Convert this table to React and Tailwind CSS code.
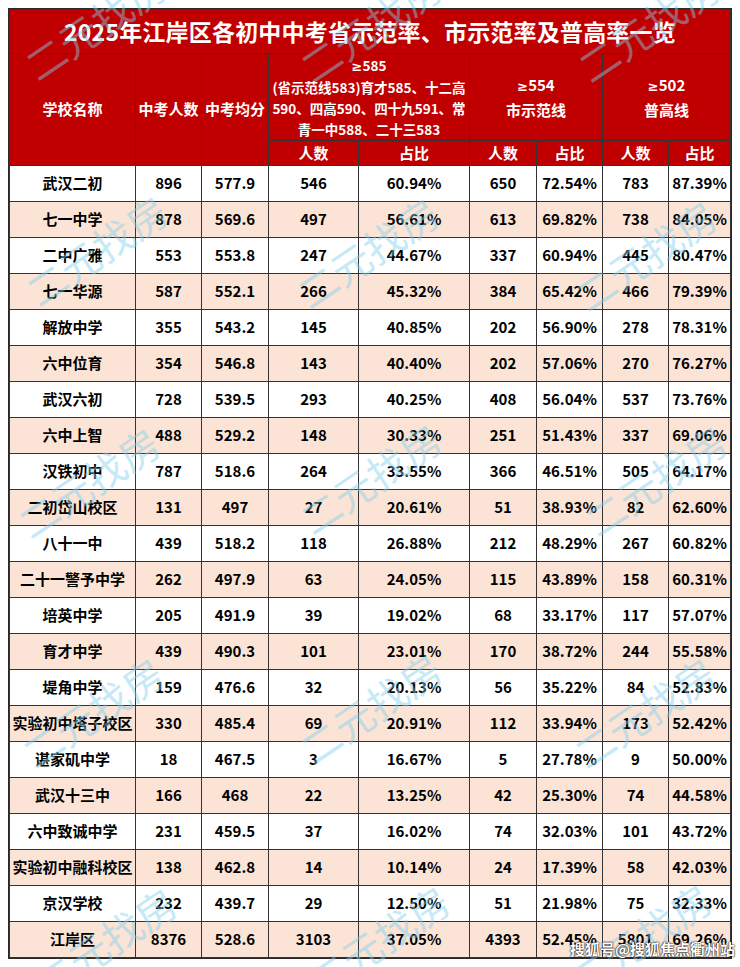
import React from "react";

const rows = [
  ["武汉二初", "896", "577.9", "546", "60.94%", "650", "72.54%", "783", "87.39%"],
  ["七一中学", "878", "569.6", "497", "56.61%", "613", "69.82%", "738", "84.05%"],
  ["二中广雅", "553", "553.8", "247", "44.67%", "337", "60.94%", "445", "80.47%"],
  ["七一华源", "587", "552.1", "266", "45.32%", "384", "65.42%", "466", "79.39%"],
  ["解放中学", "355", "543.2", "145", "40.85%", "202", "56.90%", "278", "78.31%"],
  ["六中位育", "354", "546.8", "143", "40.40%", "202", "57.06%", "270", "76.27%"],
  ["武汉六初", "728", "539.5", "293", "40.25%", "408", "56.04%", "537", "73.76%"],
  ["六中上智", "488", "529.2", "148", "30.33%", "251", "51.43%", "337", "69.06%"],
  ["汉铁初中", "787", "518.6", "264", "33.55%", "366", "46.51%", "505", "64.17%"],
  ["二初岱山校区", "131", "497", "27", "20.61%", "51", "38.93%", "82", "62.60%"],
  ["八十一中", "439", "518.2", "118", "26.88%", "212", "48.29%", "267", "60.82%"],
  ["二十一警予中学", "262", "497.9", "63", "24.05%", "115", "43.89%", "158", "60.31%"],
  ["培英中学", "205", "491.9", "39", "19.02%", "68", "33.17%", "117", "57.07%"],
  ["育才中学", "439", "490.3", "101", "23.01%", "170", "38.72%", "244", "55.58%"],
  ["堤角中学", "159", "476.6", "32", "20.13%", "56", "35.22%", "84", "52.83%"],
  ["实验初中塔子校区", "330", "485.4", "69", "20.91%", "112", "33.94%", "173", "52.42%"],
  ["谌家矶中学", "18", "467.5", "3", "16.67%", "5", "27.78%", "9", "50.00%"],
  ["武汉十三中", "166", "468", "22", "13.25%", "42", "25.30%", "74", "44.58%"],
  ["六中致诚中学", "231", "459.5", "37", "16.02%", "74", "32.03%", "101", "43.72%"],
  ["实验初中融科校区", "138", "462.8", "14", "10.14%", "24", "17.39%", "58", "42.03%"],
  ["京汉学校", "232", "439.7", "29", "12.50%", "51", "21.98%", "75", "32.33%"],
  ["江岸区", "8376", "528.6", "3103", "37.05%", "4393", "52.45%", "5801", "69.26%"],
];

// watermark centres, roughly a 3 x 5 grid
const marks = [
  [95, 24], [370, 26], [648, 26],
  [96, 250], [367, 252], [645, 255],
  [88, 482], [370, 478], [655, 480],
  [92, 712], [370, 708], [644, 712],
  [105, 942], [378, 940], [640, 938],
];

// separate borders: every cell draws its right and bottom edge
const cell = "border-r border-b border-[#333] text-center p-0";
const head = cell + " bg-[#c00000] text-white font-bold";

function Ge({ children }) {
  return (
    <span style={{ fontFamily: '"DejaVu Sans", sans-serif' }} className="text-[13px]">
      {children}
    </span>
  );
}

export default function App() {
  return (
    <div
      className="relative w-[740px] h-[967px] overflow-hidden bg-white"
      style={{ fontFamily: '"Noto Sans CJK SC", "Noto Sans", sans-serif' }}
    >
      <div className="pt-[9px] pl-[9px]">
        <table className="table-fixed border-separate border-spacing-0 border-l border-t border-[#333] outline outline-[#2a2a2a] w-[722px] text-[15px] text-black">
          <colgroup>
            <col className="w-[126px]" />
            <col className="w-[66px]" />
            <col className="w-[67px]" />
            <col className="w-[90px]" />
            <col className="w-[111px]" />
            <col className="w-[67px]" />
            <col className="w-[66px]" />
            <col className="w-[66px]" />
            <col className="w-[62px]" />
          </colgroup>
          <thead>
            <tr className="h-[44px]">
              <th colSpan={9} className={head + " text-[23px] tracking-[0.2px]"}>
                2025年江岸区各初中中考省示范率、市示范率及普高率一览
              </th>
            </tr>
            <tr className="h-[87px]">
              <th rowSpan={2} className={head}>学校名称</th>
              <th rowSpan={2} className={head}>中考人数</th>
              <th rowSpan={2} className={head}>中考均分</th>
              <th colSpan={2} className={head + " text-[13.5px] leading-[21px]"}>
                <Ge>≥</Ge>585
                <br />
                (省示范线583)育才585、十二高
                <br />
                590、四高590、四十九591、常
                <br />
                青一中588、二十三583
              </th>
              <th colSpan={2} className={head + " leading-[23px]"}>
                <Ge>≥</Ge>554
                <br />
                市示范线
              </th>
              <th colSpan={2} className={head + " leading-[23px]"}>
                <Ge>≥</Ge>502
                <br />
                普高线
              </th>
            </tr>
            <tr className="h-[25px]">
              <th className={head}>人数</th>
              <th className={head}>占比</th>
              <th className={head}>人数</th>
              <th className={head}>占比</th>
              <th className={head}>人数</th>
              <th className={head}>占比</th>
            </tr>
          </thead>
          <tbody>
            {rows.map((r, i) => (
              <tr key={r[0]} className="h-[36px]">
                {r.map((v, j) => (
                  <td
                    key={j}
                    className={cell + " font-bold whitespace-nowrap " + (i % 2 ? "bg-[#fbe4d5]" : "bg-white")}
                  >
                    {v}
                  </td>
                ))}
              </tr>
            ))}
          </tbody>
        </table>
      </div>

      {marks.map(([x, y], i) => (
        <div
          key={i}
          className="absolute pointer-events-none whitespace-nowrap text-[40px] leading-none text-[#7fd0ee] opacity-45 -rotate-[34deg] -translate-x-1/2 -translate-y-1/2"
          style={{ left: x, top: y }}
        >
          二元找房
        </div>
      ))}

      <div className="absolute right-[5px] bottom-[11px] text-[15px] leading-none font-bold text-white [text-shadow:0_0_2px_#000,0_0_1px_#000]">
        搜狐号@搜狐焦点衢州站
      </div>
    </div>
  );
}
